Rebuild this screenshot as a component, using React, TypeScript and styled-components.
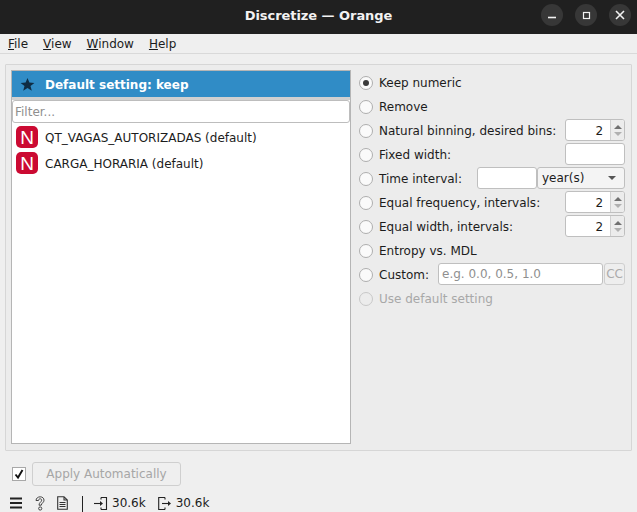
import React from "react";
import styled, { createGlobalStyle } from "styled-components";

const Global = createGlobalStyle`
  html, body { margin: 0; padding: 0; background: #efefef; }
  body { font-family: "DejaVu Sans", sans-serif; font-size: 12px; color: #1c1c1c; }
  * { box-sizing: border-box; }
`;

const Windowed = styled.div`
  width: 637px; height: 512px; display: flex; flex-direction: column; overflow: hidden; background: #efefef;
`;
const TitleBar = styled.header`
  height: 34px; flex: none; background: #202020; display: flex; align-items: flex-start; justify-content: flex-end;
  position: relative; padding: 4px 6px 0 0; gap: 12px;
`;
const Title = styled.div`
  position: absolute; left: 0; right: 0; text-align: center; color: #f2f2f2; font-weight: 700; font-size: 13px;
  top: 8px; letter-spacing: -0.05px;
`;
const WinButton = styled.button`
  width: 22px; height: 22px; border: 0; padding: 0; border-radius: 50%; background: #373737;
  display: flex; align-items: center; justify-content: center; position: relative;
`;
const MenuBar = styled.nav`
  height: 20px; flex: none; display: flex; align-items: center; padding: 0 0 0 8px; gap: 15px;
  border-bottom: 1px solid #d9d9d9;
`;
const MenuItem = styled.span`
  u { text-underline-offset: 1px; }
`;
const Group = styled.main`
  margin: 10px 5px 0; height: 387px; flex: none; border: 1px solid #d6d6d6; background: #ececec; padding: 5px 5px 6px;
  display: flex; gap: 7px; border-radius: 1px;
`;
const ListFrame = styled.section`
  width: 340px; flex: none; border: 1px solid #b5b5b5; background: #fff; display: flex; flex-direction: column;
`;
const Header = styled.div`
  height: 26px; flex: none; background: #308cc6; color: #fff; font-weight: 700; display: flex; align-items: center;
  padding: 1px 0 0 8px; gap: 10px;
`;
const Sep = styled.div`height: 3px; flex: none; background: #d0d0d0;`;
const Filter = styled.div`
  height: 23px; flex: none; border: 1px solid #bdbdbd; border-radius: 3px; background: #fff; color: #8f8f8f;
  display: flex; align-items: center; padding-left: 2px; margin-bottom: 1px;
`;
const Item = styled.div`
  height: 26px; flex: none; display: flex; align-items: center; padding-left: 4px; gap: 7px; color: #1c1c1c;
`;
const ItemLabel = styled.span`padding-top: 2px;`;
const Badge = styled.span`
  width: 22px; height: 22px; flex: none; border-radius: 5px; background: #cb0a32; color: #fff; display: flex;
  align-items: center; justify-content: center; font-family: "Liberation Sans", sans-serif; font-size: 19px; line-height: 1;
`;
const Options = styled.section`
  flex: 1; display: flex; flex-direction: column; padding: 0 1px 0 0;
`;
const Row = styled.div<{ $disabled?: boolean }>`
  height: 24px; flex: none; display: flex; align-items: center; padding-top: 2px;
  color: ${p => (p.$disabled ? "#a8a8a8" : "#1c1c1c")};
`;
const Radio = styled.span<{ $checked?: boolean; $disabled?: boolean }>`
  width: 14px; height: 14px; flex: none; border-radius: 50%; margin-right: 6px; margin-left: 1px;
  border: 1px solid ${p => (p.$disabled ? "#c8c8c8" : "#aeaeae")};
  background: ${p => (p.$disabled ? "#ececec" : "#fafafa")};
  display: flex; align-items: center; justify-content: center;
  &::after { content: ""; width: 6px; height: 6px; border-radius: 50%; background: ${p => (p.$checked ? "#3a3a3a" : "transparent")}; }
`;
const Grow = styled.span`flex: 1;`;
const Field = styled.div<{ $w: number }>`
  width: ${p => p.$w}px; height: 22px; flex: none; background: #fff; border: 1px solid #bfbfbf; border-radius: 3px;
  margin-top: -2px;
`;
const Spin = styled.div`
  width: 60px; height: 22px; flex: none; background: #fff; border: 1px solid #bfbfbf; border-radius: 3px;
  display: flex; align-items: center; justify-content: flex-end; margin-top: -2px;
`;
const SpinValue = styled.span`padding: 1px 7px 0 0;`;
const SpinArrows = styled.span`
  width: 14px; height: 20px; background: #ececec; border-left: 1px solid #d0d0d0; display: flex; flex-direction: column;
  align-items: center; justify-content: center; gap: 3px; border-radius: 0 2px 2px 0;
`;
const Up = styled.i`width: 0; height: 0; border: 4px solid transparent; border-top: 0; border-bottom: 4px solid #707070;`;
const Down = styled.i`width: 0; height: 0; border: 4px solid transparent; border-bottom: 0; border-top: 4px solid #b0b0b0;`;
const Combo = styled.div`
  width: 88px; height: 22px; flex: none; background: #f4f4f4; border: 1px solid #bfbfbf; border-radius: 3px;
  display: flex; align-items: center; justify-content: space-between; padding: 0 8px 0 4px; margin-top: -2px;
`;
const ComboArrow = styled.i`width: 0; height: 0; border: 4px solid transparent; border-bottom: 0; border-top: 4px solid #555;`;
const CustomInput = styled.div`
  width: 165px; height: 22px; flex: none; background: #fff; border: 1px solid #bfbfbf; border-radius: 3px; color: #8f8f8f;
  display: flex; align-items: center; padding: 0 0 0 3px; margin: -2px 0 0 9px;
`;
const CcButton = styled.div`
  width: 21px; height: 22px; flex: none; border: 1px solid #cfcfcf; border-radius: 3px; color: #ababab; margin: -2px 0 0 1px;
  display: flex; align-items: center; justify-content: center; background: #eeeeee; font-size: 12px;
`;
const ApplyBar = styled.div`
  height: 24px; flex: none; margin-top: 11px; padding-left: 12px; display: flex; align-items: center; gap: 6px;
`;
const Check = styled.span`
  width: 14px; height: 14px; background: #fff; border: 1px solid #a8a8a8; display: flex; align-items: center; justify-content: center;
`;
const ApplyButton = styled.div`
  width: 149px; height: 24px; border: 1px solid #cfcfcf; border-radius: 3px; background: #efefef; color: #a6a6a6;
  display: flex; align-items: center; justify-content: center;
`;
const StatusBar = styled.footer`
  height: 22px; flex: none; margin-top: 6px; padding-left: 10px; display: flex; align-items: center; color: #1c1c1c;
`;
const StatusDivider = styled.span`width: 1px; height: 18px; align-self: flex-end; background: #222; margin: 0 10px 0 14px;`;
const StatusCount = styled.span`margin: 0 12px 0 4px;`;
const Ico = styled.svg`flex: none; display: block;`;
const StatusIcon = styled(Ico)<{ $gap: number }>`margin-right: ${p => p.$gap}px;`;

export default function App() {
  return (
    <Windowed>
      <Global />
      <TitleBar>
        <Title>Discretize — Orange</Title>
        <WinButton aria-label="minimize">
          <Ico width="22" height="22" viewBox="0 0 22 22"><path d="M7 13.500h8" stroke="#f2f2f2" strokeWidth="1.6" /></Ico>
        </WinButton>
        <WinButton aria-label="maximize">
          <Ico width="22" height="22" viewBox="0 0 22 22"><rect x="8.500" y="8.500" width="6" height="6" fill="none" stroke="#f2f2f2" strokeWidth="1.2" /></Ico>
        </WinButton>
        <WinButton aria-label="close">
          <Ico width="22" height="22" viewBox="0 0 22 22"><path d="M7 7l8 8M15 7l-8 8" stroke="#f2f2f2" strokeWidth="1.6" /></Ico>
        </WinButton>
      </TitleBar>
      <MenuBar>
        <MenuItem><u>F</u>ile</MenuItem>
        <MenuItem><u>V</u>iew</MenuItem>
        <MenuItem><u>W</u>indow</MenuItem>
        <MenuItem><u>H</u>elp</MenuItem>
      </MenuBar>
      <Group>
        <ListFrame>
          <Header>
            <Ico width="15" height="15" viewBox="0 0 15 15"><path d="M7.500 1l1.900 4.600 5 .3-3.900 3.100 1.300 4.800-4.300-2.700-4.300 2.700 1.300-4.800L.6 5.900l5-.3z" fill="#0f2d44" /></Ico>
            <span>Default setting: keep</span>
          </Header>
          <Sep />
          <Filter>Filter...</Filter>
          <Item><Badge>N</Badge><ItemLabel>QT_VAGAS_AUTORIZADAS (default)</ItemLabel></Item>
          <Item><Badge>N</Badge><ItemLabel>CARGA_HORARIA (default)</ItemLabel></Item>
        </ListFrame>
        <Options>
          <Row><Radio $checked />Keep numeric</Row>
          <Row><Radio />Remove</Row>
          <Row>
            <Radio />Natural binning, desired bins:<Grow />
            <Spin><SpinValue>2</SpinValue><SpinArrows><Up /><Down /></SpinArrows></Spin>
          </Row>
          <Row><Radio />Fixed width:<Grow /><Field $w={60} /></Row>
          <Row>
            <Radio />Time interval:<Grow />
            <Field $w={60} />
            <Combo>year(s)<ComboArrow /></Combo>
          </Row>
          <Row>
            <Radio />Equal frequency, intervals:<Grow />
            <Spin><SpinValue>2</SpinValue><SpinArrows><Up /><Down /></SpinArrows></Spin>
          </Row>
          <Row>
            <Radio />Equal width, intervals:<Grow />
            <Spin><SpinValue>2</SpinValue><SpinArrows><Up /><Down /></SpinArrows></Spin>
          </Row>
          <Row><Radio />Entropy vs. MDL</Row>
          <Row>
            <Radio />Custom:
            <CustomInput>e.g. 0.0, 0.5, 1.0</CustomInput>
            <CcButton>CC</CcButton>
          </Row>
          <Row $disabled><Radio $disabled />Use default setting</Row>
        </Options>
      </Group>
      <ApplyBar>
        <Check>
          <Ico width="12" height="12" viewBox="0 0 12 12"><path d="M2.500 6.500l2.500 3 4.500-7.500" fill="none" stroke="#111" strokeWidth="1.9" /></Ico>
        </Check>
        <ApplyButton>Apply Automatically</ApplyButton>
      </ApplyBar>
      <StatusBar>
        <StatusIcon $gap={12} width="12" height="12" viewBox="0 0 12 12"><path d="M0 1.500h12M0 6h12M0 10.500h12" stroke="#222" strokeWidth="1.8" /></StatusIcon>
        <StatusIcon $gap={11} width="12" height="15" viewBox="0 0 12 15">
          <path d="M2 4.500C2 2.300 4 .8 6.200.8c2.300 0 3.800 1.500 3.800 3.400 0 2.600-2.700 2.800-2.700 5H5c0-3 2.700-3.200 2.700-5 0-.8-.6-1.400-1.500-1.400-1 0-1.700.7-1.700 1.700z" fill="none" stroke="#444" strokeWidth="1" />
          <circle cx="6.200" cy="12.500" r="1.600" fill="none" stroke="#444" strokeWidth="1" />
        </StatusIcon>
        <Ico width="11" height="14" viewBox="0 0 11 14">
          <path d="M.7.700h6.300l3.300 3.300v9.300H.7zM7 .7v3.300h3.300M2.500 6.500h6M2.500 8.500h6M2.500 10.500h6" fill="none" stroke="#333" strokeWidth="1.100" />
        </Ico>
        <StatusDivider />
        <Ico width="15" height="15" viewBox="0 0 15 15">
          <path d="M8 1.500h5.500v12H8M8 1.500v2M8 13.500v-2" fill="none" stroke="#222" strokeWidth="1.100" />
          <path d="M1 7.500h7" stroke="#222" strokeWidth="1.100" />
          <path d="M7 5l3 2.500L7 10z" fill="#222" />
        </Ico>
        <StatusCount>30.6k</StatusCount>
        <Ico width="14" height="15" viewBox="0 0 14 15">
          <path d="M7 1.500H.7v12H7M7 1.500v2M7 13.500v-2" fill="none" stroke="#222" strokeWidth="1.100" />
          <path d="M4 7.500h7" stroke="#222" strokeWidth="1.100" />
          <path d="M10 5l3 2.500L10 10z" fill="#222" />
        </Ico>
        <StatusCount>30.6k</StatusCount>
      </StatusBar>
    </Windowed>
  );
}
